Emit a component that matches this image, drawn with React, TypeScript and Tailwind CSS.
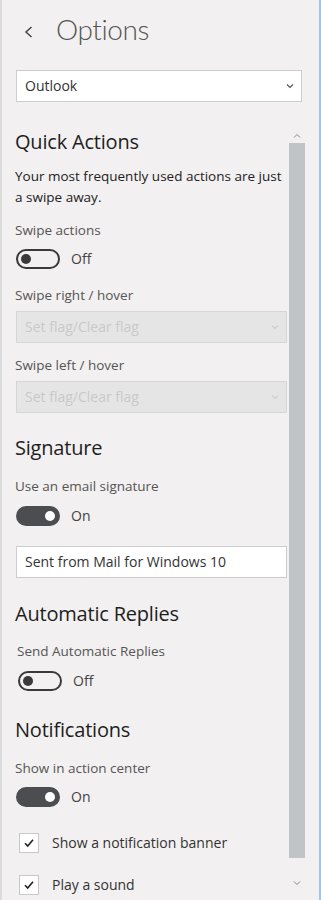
import React from "react";

const font = { fontFamily: '"Open Sans", "Noto Sans", sans-serif' };

function Toggle({ on }: { on: boolean }) {
  return on ? (
    <div className="w-[44px] h-[20px] rounded-full bg-[#4b4d51] flex items-center justify-end pr-[5px]">
      <div className="w-[10px] h-[10px] rounded-full bg-white" />
    </div>
  ) : (
    <div className="w-[44px] h-[20px] rounded-full border-2 border-[#3a3a3a] flex items-center pl-[3px]">
      <div className="w-[10px] h-[10px] rounded-full bg-[#3a3a3a]" />
    </div>
  );
}

function Chevron({ color = "#666", size = 10 }: { color?: string; size?: number }) {
  return (
    <svg width={size} height={size} viewBox="0 0 10 10" fill="none">
      <path d="M2 3.5 L5 6.5 L8 3.5" stroke={color} strokeWidth="1.2" />
    </svg>
  );
}

function Check() {
  return (
    <div className="w-[20px] h-[20px] bg-white border border-[#c8c8c8] flex items-center justify-center">
      <svg width="12" height="12" viewBox="0 0 12 12" fill="none">
        <path d="M2 6.2 L4.7 9 L10 2.8" stroke="#222" strokeWidth="1.6" />
      </svg>
    </div>
  );
}

export default function App() {
  return (
    <div
      className="w-[321px] h-[900px] bg-[#f2f0f0] text-[#222] overflow-hidden border-l-2 border-l-[#dcdcdc] border-r-2 border-r-[#a9c3dc]"
      style={font}
    >
      <div className="flex items-start h-[62px] pl-[22px]">
        <svg width="10" height="12" viewBox="0 0 10 12" fill="none" className="mt-[26px] mr-[22px]">
          <path d="M7.5 1 L2 6 L7.5 11" stroke="#444" strokeWidth="1.5" />
        </svg>
        <span
          className="mt-[15px] text-[28px] font-light text-[#555] leading-none tracking-[-0.4px]"
          style={{ fontFamily: 'Lato, "Open Sans", sans-serif' }}
        >
          Options
        </span>
      </div>
      <div className="ml-[14px] mr-[17px] mt-[8px] h-[32px] bg-white border border-[#cdcdcd] flex items-center justify-between pl-[8px] pr-[6px]">
        <span className="text-[14px] text-[#333] leading-[20px]">Outlook</span>
        <Chevron color="#555" />
      </div>

      <div className="flex mt-[27px]">
        <div className="w-[272px] ml-[13px]">
          <div className="text-[20px] leading-[26px] text-[#1e1e1e] tracking-[-0.2px]">Quick Actions</div>
          <div className="text-[13.5px] leading-[21px] mt-[11px] text-[#222]">
            Your most frequently used actions are just a swipe away.
          </div>
          <div className="text-[13.5px] text-[#555] mt-[12px] leading-[20px]">Swipe actions</div>
          <div className="flex items-center mt-[9px] ml-[1px]">
            <Toggle on={false} />
            <span className="ml-[11px] text-[14px] leading-[20px] text-[#444]">Off</span>
          </div>
          <div className="text-[13.5px] text-[#555] mt-[16px] leading-[20px]">Swipe right / hover</div>
          <div className="mt-[6px] ml-[1px] h-[32px] bg-[#e6e5e5] border border-[#d6d6d6] flex items-center justify-between pl-[8px] pr-[6px]">
            <span className="text-[14px] leading-[20px] text-[#c9c9c9]">Set flag/Clear flag</span>
            <Chevron color="#cfcfcf" />
          </div>
          <div className="text-[13.5px] text-[#555] mt-[12px] leading-[20px]">Swipe left / hover</div>
          <div className="mt-[6px] ml-[1px] h-[32px] bg-[#e6e5e5] border border-[#d6d6d6] flex items-center justify-between pl-[8px] pr-[6px]">
            <span className="text-[14px] leading-[20px] text-[#c9c9c9]">Set flag/Clear flag</span>
            <Chevron color="#cfcfcf" />
          </div>

          <div className="text-[20px] leading-[26px] text-[#1e1e1e] mt-[22px] tracking-[-0.2px]">Signature</div>
          <div className="text-[13.5px] text-[#555] mt-[15px] leading-[20px]">Use an email signature</div>
          <div className="flex items-center mt-[10px] ml-[1px]">
            <Toggle on={true} />
            <span className="ml-[11px] text-[14px] leading-[20px] text-[#444]">On</span>
          </div>
          <div className="mt-[20px] ml-[1px] h-[32px] bg-white border border-[#cdcdcd] flex items-center pl-[8px]">
            <span className="text-[14px] leading-[20px] text-[#333]">Sent from Mail for Windows 10</span>
          </div>

          <div className="text-[20px] leading-[26px] text-[#1e1e1e] mt-[23px] tracking-[-0.2px]">Automatic Replies</div>
          <div className="text-[13.5px] text-[#555] mt-[14px] leading-[20px] ml-[2px]">Send Automatic Replies</div>
          <div className="flex items-center mt-[10px] ml-[3px]">
            <Toggle on={false} />
            <span className="ml-[11px] text-[14px] leading-[20px] text-[#444]">Off</span>
          </div>

          <div className="text-[20px] leading-[26px] text-[#1e1e1e] mt-[26px] tracking-[-0.2px]">Notifications</div>
          <div className="text-[13.5px] text-[#555] mt-[15px] leading-[20px]">Show in action center</div>
          <div className="flex items-center mt-[9px] ml-[1px]">
            <Toggle on={true} />
            <span className="ml-[11px] text-[14px] leading-[20px] text-[#444]">On</span>
          </div>
          <div className="flex items-center mt-[26px] ml-[4px]">
            <Check />
            <span className="ml-[13px] text-[14px] leading-[20px] text-[#333]">Show a notification banner</span>
          </div>
          <div className="flex items-center mt-[22px] ml-[4px]">
            <Check />
            <span className="ml-[13px] text-[14px] leading-[20px] text-[#333]">Play a sound</span>
          </div>
        </div>

        <div className="w-[16px] ml-[2px] flex flex-col items-center">
          <div className="h-[14px] flex items-center justify-center">
            <svg width="10" height="10" viewBox="0 0 10 10" fill="none">
              <path d="M2 6.5 L5 3.5 L8 6.5" stroke="#888" strokeWidth="1" />
            </svg>
          </div>
          <div className="w-[16px] h-[715px] bg-[#c1c4c7]" />
          <div className="pt-[20px] flex justify-center">
            <svg width="10" height="10" viewBox="0 0 10 10" fill="none">
              <path d="M2 3.5 L5 6.5 L8 3.5" stroke="#888" strokeWidth="1" />
            </svg>
          </div>
        </div>
      </div>
    </div>
  );
}
